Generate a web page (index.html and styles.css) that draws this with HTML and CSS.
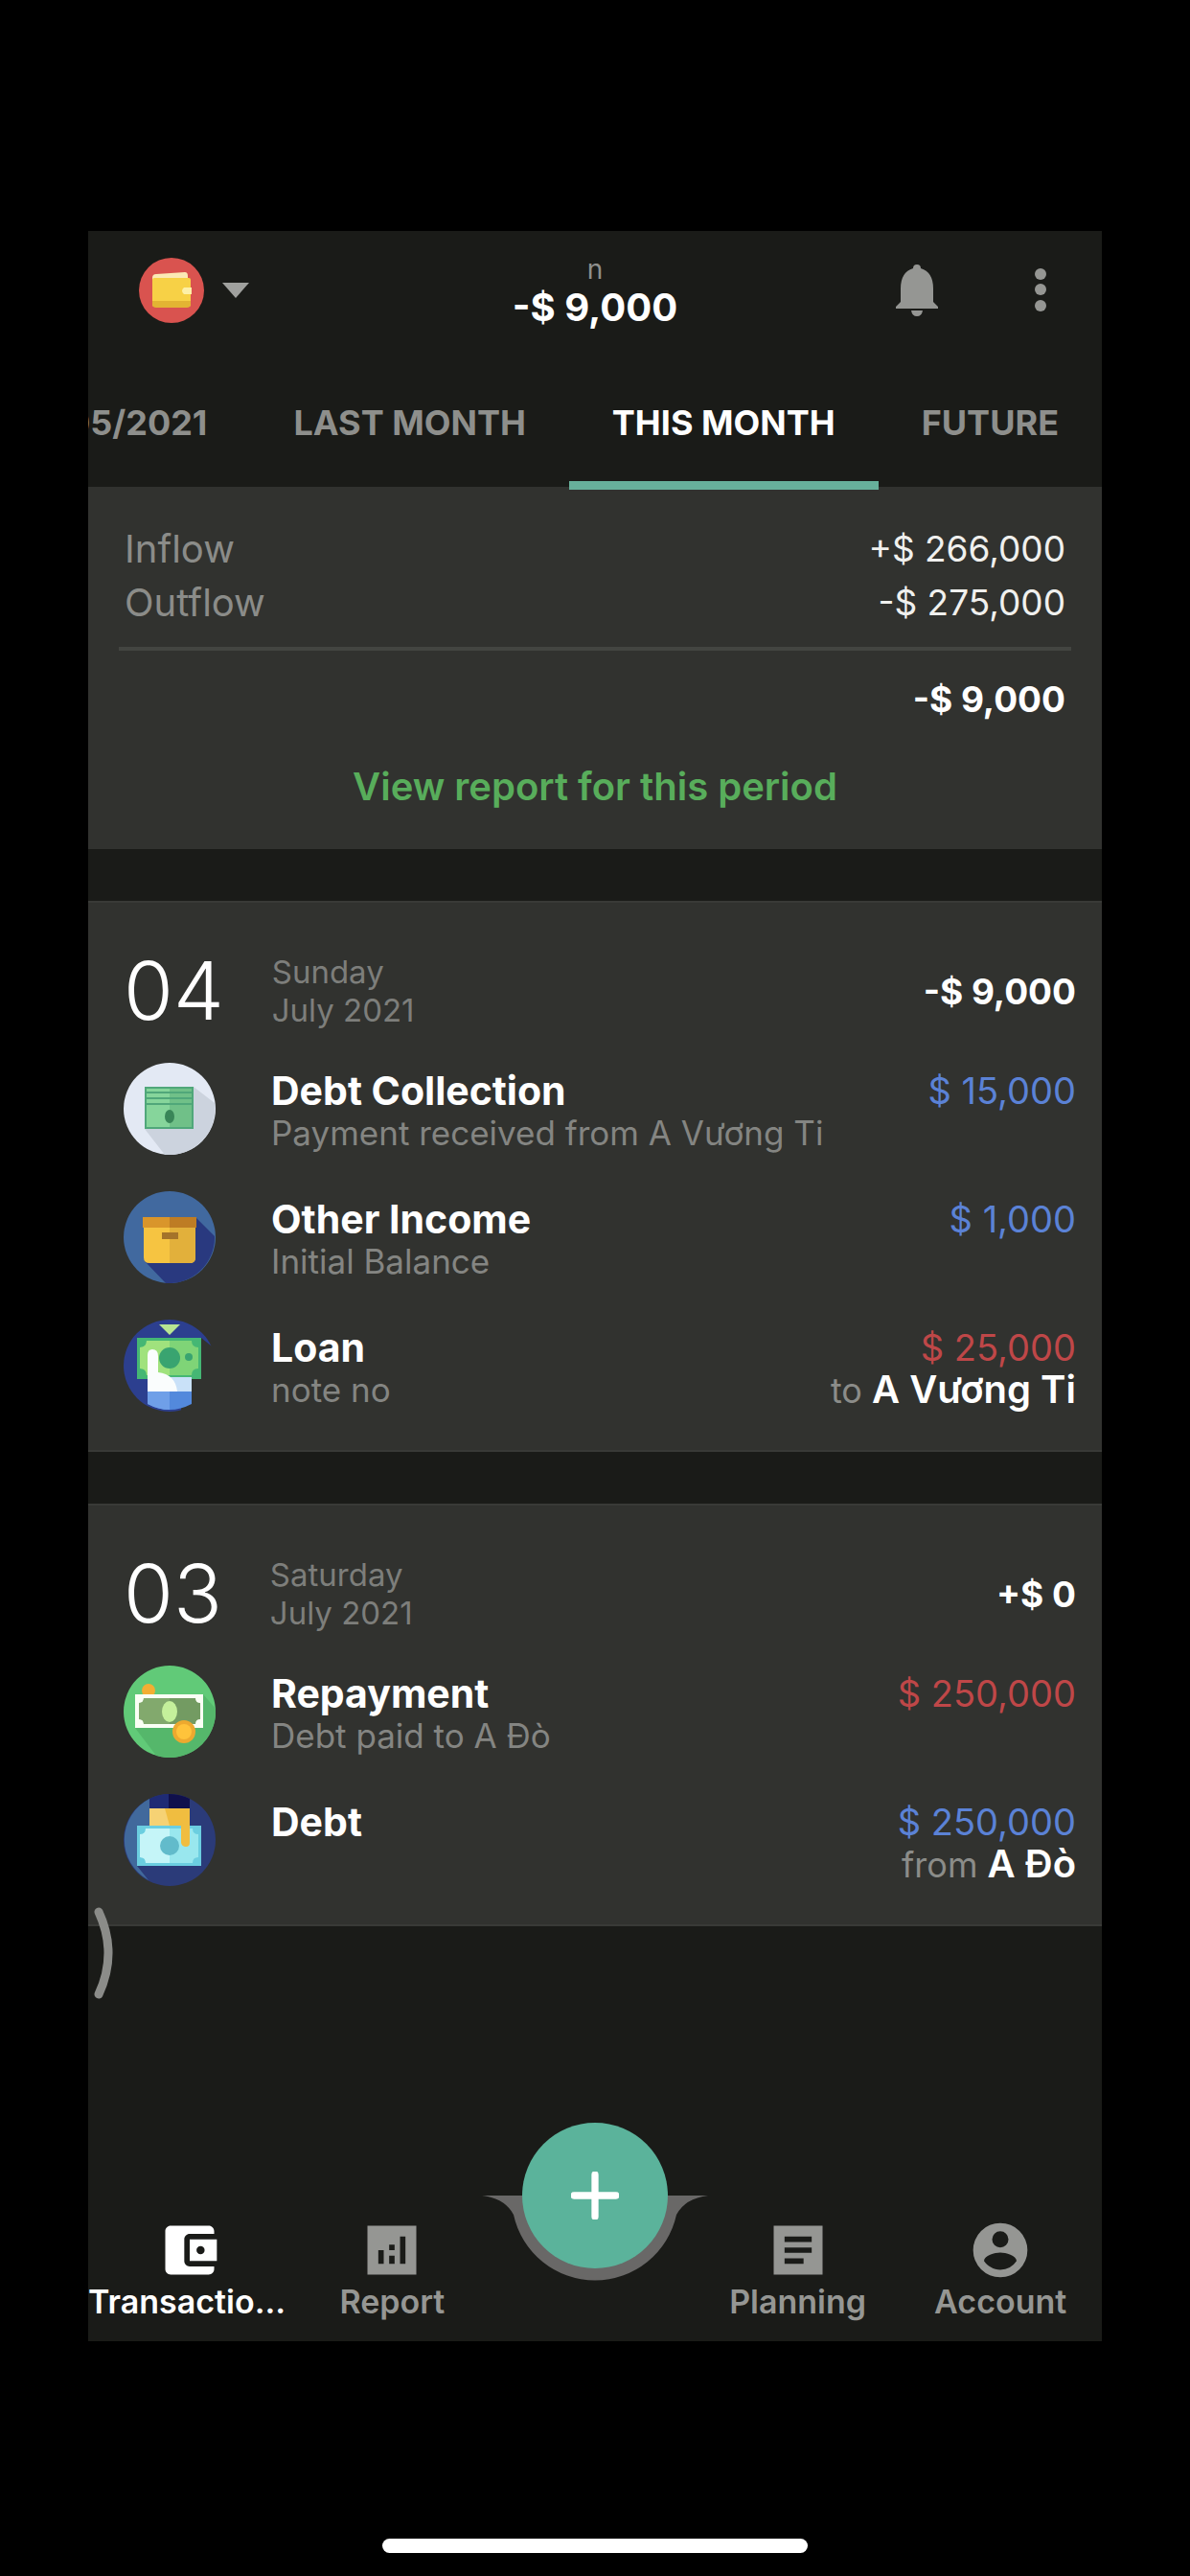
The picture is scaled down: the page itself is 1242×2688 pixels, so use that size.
FILE: index.html
```html
<!DOCTYPE html>
<html lang="en">
<head>
<meta charset="utf-8">
<meta name="viewport" content="width=device-width, initial-scale=1">
<title>Transactions</title>
<link rel="stylesheet" href="styles.css">
</head>
<body>
<div class="app">
  <header class="app-bar">
    <button class="wallet-picker" type="button" aria-label="Choose wallet">
      <svg class="wallet-icon" viewBox="0 0 70 70" aria-hidden="true">
        <circle cx="35" cy="35" r="34" fill="#d9534f"/>
        <path d="M15 22q0-4 4-4l30-2q3 0 3 4v6H15z" fill="#fbe9b4"/>
        <rect x="15" y="22" width="40" height="30" rx="2" fill="#f7d146"/>
        <path d="M15 46h40v3q0 4-4 4H19q-4 0-4-4z" fill="#e3b433"/>
        <path d="M48 32h8v7h-8q-4-3.500 0-7z" fill="#fdf0a8"/>
      </svg>
      <svg class="caret" viewBox="0 0 28 16" aria-hidden="true"><path d="M0 0h28L14 16z" fill="#a0a19e"/></svg>
    </button>
    <div class="title">
      <span class="title-name">n</span>
      <strong class="title-balance">-$ 9,000</strong>
    </div>
    <div class="actions">
      <button class="icon-button" type="button" aria-label="Notifications">
        <svg viewBox="0 0 72 72" aria-hidden="true"><path d="M32 13q0-4 4-4t4 4q13 4 13 21v14l5 5v2H14v-2l5-5V34q0-17 13-21zM30 57h12q-1 6-6 6t-6-6z" fill="#959693"/></svg>
      </button>
      <button class="icon-button" type="button" aria-label="More options">
        <svg viewBox="0 0 72 72" aria-hidden="true" fill="#959693"><circle cx="36" cy="19" r="6"/><circle cx="36" cy="35" r="6"/><circle cx="36" cy="52" r="6"/></svg>
      </button>
    </div>
  </header>

  <nav class="tabs" aria-label="Period">
    <button class="tab" type="button">05/2021</button>
    <button class="tab" type="button">LAST MONTH</button>
    <button class="tab tab-active" type="button" aria-current="true">THIS MONTH</button>
    <button class="tab" type="button">FUTURE</button>
  </nav>

  <main class="content">
    <section class="card summary">
      <div class="summary-line"><span class="muted">Inflow</span><span class="summary-value">+$ 266,000</span></div>
      <div class="summary-line"><span class="muted">Outflow</span><span class="summary-value">-$ 275,000</span></div>
      <hr class="divider">
      <div class="summary-total">-$ 9,000</div>
      <a class="report-link" href="#report">View report for this period</a>
    </section>

    <section class="card day">
      <header class="day-header">
        <span class="day-number">04</span>
        <span class="day-date">Sunday<br>July 2021</span>
        <strong class="day-total">-$ 9,000</strong>
      </header>
      <ul class="rows">
        <li class="row">
          <svg class="category" viewBox="0 0 96 96" aria-hidden="true">
            <circle cx="48" cy="48" r="48" fill="#e3e9f4"/>
            <path d="M73 25l22 17a48 48 0 0 1-52 54L22 69z" fill="#ccd3de"/>
            <path d="M22 25h51v44H22z" fill="#86d59b"/>
            <path d="M48 25h25v44H48z" fill="#70c088"/>
            <path d="M23 26h49v42H23zM24 31h48M24 37h48M24 43h48" fill="none" stroke="#50a77a" stroke-width="2"/>
            <ellipse cx="48" cy="56" rx="5" ry="7" fill="#398558"/>
          </svg>
          <div class="row-text"><strong class="row-title">Debt Collection</strong><span class="row-note">Payment received from A Vương Ti</span></div>
          <div class="row-amount"><span class="in">$ 15,000</span></div>
        </li>
        <li class="row">
          <svg class="category" viewBox="0 0 96 96" aria-hidden="true">
            <circle cx="48" cy="48" r="48" fill="#41699f"/>
            <path d="M76 28l19 19a48 48 0 0 1-51 49L22 73z" fill="#29397f"/>
            <path d="M21 36h54v33q0 6-6 6H27q-6 0-6-6z" fill="#f6c441"/>
            <path d="M48 36h27v33q0 6-6 6H48z" fill="#e2b03b"/>
            <path d="M20 27h28v11H20z" fill="#d9952b"/><path d="M48 27h28v11H48z" fill="#be7c24"/>
            <path d="M40 43h17v7H40z" fill="#a4732a"/>
          </svg>
          <div class="row-text"><strong class="row-title">Other Income</strong><span class="row-note">Initial Balance</span></div>
          <div class="row-amount"><span class="in">$ 1,000</span></div>
        </li>
        <li class="row">
          <svg class="category" viewBox="0 0 96 96" aria-hidden="true">
            <circle cx="48" cy="48" r="48" fill="#2c3f8f"/>
            <path d="M81 19l15 12v65H60V60z" fill="#31322f"/>
            <path d="M37 5h22L48 16z" fill="#b8e692"/>
            <path d="M14 19h67v43H14z" fill="#45b774"/>
            <path d="M24 22h47q0 7 7 7v22q-7 0-7 7H24q0-7-7-7V29q7 0 7-7z" fill="#7fd477"/>
            <path d="M24 22h24v36H24q0-7-7-7V29q7 0 7-7z" fill="#a0e27d"/>
            <circle cx="48" cy="40" r="11" fill="#39a470"/><circle cx="68" cy="39" r="4" fill="#39a470"/>
            <path d="M25 60h46v16H25z" fill="#c9e1f8"/>
            <path d="M25 37q0-6 5-6 6 0 6 7v17q18 2 20 20H25z" fill="#fafdfd"/>
            <path d="M25 75h46v13q-23 12-46 0z" fill="#5389dc"/>
            <path d="M25 75h23v19q-12 0-23-6z" fill="#6f9fe8"/>
          </svg>
          <div class="row-text"><strong class="row-title">Loan</strong><span class="row-note">note no</span></div>
          <div class="row-amount"><span class="out">$ 25,000</span><span class="party">to <b>A Vương Ti</b></span></div>
        </li>
      </ul>
    </section>

    <section class="card day">
      <header class="day-header">
        <span class="day-number">03</span>
        <span class="day-date">Saturday<br>July 2021</span>
        <strong class="day-total">+$ 0</strong>
      </header>
      <ul class="rows">
        <li class="row">
          <svg class="category" viewBox="0 0 96 96" aria-hidden="true">
            <circle cx="48" cy="48" r="48" fill="#61ca78"/>
            <path d="M83 30l13 15a48 48 0 0 1-62 49L12 65z" fill="#55b76b"/>
            <circle cx="26" cy="26" r="7" fill="#f3ae33"/>
            <path d="M12 30h71v35H12z" fill="#fafff5"/>
            <path d="M21 34h54q0 5 5 5v17q-5 0-5 5H21q0-5-5-5V39q5 0 5-5z" fill="#739b62"/>
            <path d="M21 34h27v27H21q0-5-5-5V39q5 0 5-5z" fill="#82a96d"/>
            <ellipse cx="48" cy="48" rx="8" ry="11" fill="#c4f09b"/>
            <circle cx="63" cy="69" r="12" fill="#eda92f"/><circle cx="63" cy="69" r="8" fill="#ffc33b"/>
          </svg>
          <div class="row-text"><strong class="row-title">Repayment</strong><span class="row-note">Debt paid to A Đò</span></div>
          <div class="row-amount"><span class="out">$ 250,000</span></div>
        </li>
        <li class="row">
          <svg class="category" viewBox="0 0 96 96" aria-hidden="true">
            <circle cx="48" cy="48" r="48" fill="#2b3b79"/>
            <path d="M27 5v28H14v42l12 15A48 48 0 0 1 27 5z" fill="#41699c"/>
            <path d="M27 5Q37 0 47 0v16H27z" fill="#1f2b74"/><path d="M47 0q12 0 22 5v11H47z" fill="#10104c"/>
            <path d="M14 33h67v42H14z" fill="#6bcee0"/>
            <path d="M23 36h49q0 6 6 6v24q-6 0-6 6H23q0-6-6-6V42q6 0 6-6z" fill="#99e7ee"/>
            <path d="M23 36h25v36H23q0-6-6-6V42q6 0 6-6z" fill="#c5f5f8"/>
            <circle cx="48" cy="54" r="10" fill="#62bbcb"/>
            <path d="M27 15h42v36q0 4-4 4t-5-4V33H27z" fill="#f0bd40"/><path d="M27 15h16l5 18H27z" fill="#f6d274"/>
          </svg>
          <div class="row-text"><strong class="row-title">Debt</strong></div>
          <div class="row-amount"><span class="in">$ 250,000</span><span class="party">from <b>A Đò</b></span></div>
        </li>
      </ul>
      <svg class="edge-handle" viewBox="0 0 20 96" aria-hidden="true"><path d="M5 5q20 43 0 86" fill="none" stroke="#8b8c89" stroke-width="9" stroke-linecap="round"/></svg>
    </section>
  </main>

  <nav class="bottom-nav" aria-label="Main">
    <a class="nav-item nav-active" href="#transactions">
      <svg class="nav-icon" viewBox="0 0 24 24" aria-hidden="true"><path fill="currentColor" d="M21 18v1c0 1.100-.9 2-2 2H5c-1.110 0-2-.9-2-2V5c0-1.100.89-2 2-2h14c1.100 0 2 .9 2 2v1h-9c-1.110 0-2 .9-2 2v8c0 1.100.89 2 2 2h9zm-9-2h10V8H12v8zm4-2.500c-.83 0-1.500-.67-1.500-1.500s.67-1.500 1.500-1.500 1.500.67 1.500 1.500-.67 1.500-1.500 1.500z"/></svg>
      <span class="nav-label">Transactio...</span>
    </a>
    <a class="nav-item" href="#report">
      <svg class="nav-icon" viewBox="0 0 24 24" aria-hidden="true"><path fill="currentColor" fill-rule="evenodd" d="M3 3h18v18H3zM7 12v5h2v-5zM11 10v2h2v-2zM11 14v3h2v-3zM15 7v10h2V7z"/></svg>
      <span class="nav-label">Report</span>
    </a>
    <div class="nav-center">
      <svg class="cradle" viewBox="0 0 236 92" aria-hidden="true"><path d="M0 0h236q-24 3-33 20a87 87 0 0 1-170 0Q24 3 0 0z" fill="#696867"/></svg>
      <button class="fab" type="button" aria-label="Add transaction">
        <svg class="fab-icon" viewBox="0 0 48 48" aria-hidden="true"><path d="M24 3v42M3 24h42" stroke="#fff" stroke-width="7" stroke-linecap="round"/></svg>
      </button>
    </div>
    <a class="nav-item" href="#planning">
      <svg class="nav-icon" viewBox="0 0 24 24" aria-hidden="true"><path fill="currentColor" fill-rule="evenodd" d="M3 3h18v18H3zM7 7v2h10V7zM7 11v2h10v-2zM7 15v2h7v-2z"/></svg>
      <span class="nav-label">Planning</span>
    </a>
    <a class="nav-item" href="#account">
      <svg class="nav-icon" viewBox="0 0 24 24" aria-hidden="true"><path fill="currentColor" fill-rule="evenodd" d="M12 2a10 10 0 1 0 0 20 10 10 0 0 0 0-20zM12 5a3 3 0 1 1 0 6 3 3 0 0 1 0-6zM12 19.200c-2.500 0-4.710-1.280-6-3.220.03-1.990 4-3.080 6-3.080s5.970 1.090 6 3.080a7.200 7.200 0 0 1-6 3.220z"/></svg>
      <span class="nav-label">Account</span>
    </a>
  </nav>
</div>
<div class="home-indicator"></div>
</body>
</html>
```
FILE: styles.css
```css
* { box-sizing: border-box; }

body {
  margin: 0;
  min-height: 100vh;
  display: flex;
  flex-direction: column;
  background: #000;
  color: #fff;
  font-family: Inter, "Noto Sans", sans-serif;
  font-size: 37px;
}

button {
  padding: 0;
  border: 0;
  background: none;
  color: inherit;
  font: inherit;
}

a { color: inherit; text-decoration: none; }
svg { display: block; }

.app {
  flex: 1;
  display: flex;
  flex-direction: column;
  margin: 241px 92px 0;
  background: #1a1b18;
}

/* Top bar */
.app-bar {
  display: grid;
  grid-template-columns: 1fr auto 1fr;
  align-items: center;
  min-height: 124px;
  padding: 0 28px;
}

.wallet-picker {
  justify-self: start;
  display: flex;
  align-items: center;
  gap: 18px;
  padding-left: 24px;
}

.wallet-icon { width: 70px; height: 70px; }
.caret { width: 28px; height: 16px; }

.title {
  display: flex;
  flex-direction: column;
  align-items: center;
}

.title-name { font-size: 28px; line-height: 36px; color: #8e8f8c; }
.title-balance { font-size: 40px; line-height: 44px; }
.actions { justify-self: end; display: flex; gap: 57px; }
.icon-button, .icon-button svg { width: 72px; height: 72px; }

/* The active underline overlaps the card below by 3px */
.tabs {
  display: flex;
  justify-content: flex-end;
  position: relative;
  z-index: 1;
  height: 146px;
  margin-bottom: -3px;
  overflow: hidden;
}

.tab {
  flex: none;
  padding: 14px 45px 0;
  border-bottom: 9px solid transparent;
  color: #8e8f8c;
  font-size: 36px;
  font-weight: 700;
  white-space: nowrap;
}

.tab-active { color: #fff; border-color: #67b09b; }

/* Cards */
.content { flex: 1; display: flex; flex-direction: column; gap: 54px; }
.card { background: #31322f; }

.summary {
  display: flex;
  flex-direction: column;
  padding: 37px 32px;
  line-height: 56px;
}

.summary-line { display: flex; justify-content: space-between; padding: 0 6px; }
.muted { font-size: 40px; color: #8b8c89; }
.summary-value { color: #f0f0ee; }
.divider { width: 100%; height: 4px; margin: 18px 0 23px; border: 0; background: #434541; }
.summary-total { padding: 0 6px; text-align: right; font-weight: 700; }
.report-link { align-self: center; margin-top: 35px; font-size: 40px; font-weight: 600; color: #58ad5b; }

.day {
  position: relative;
  padding: 52px 27px 21px 37px;
  border-top: 2px solid #393a37;
  border-bottom: 2px solid #393a37;
}

.day-header { display: flex; align-items: center; margin-bottom: 16px; }
.day-number { font-size: 84px; line-height: 80px; font-weight: 300; }
.day-date { margin-left: 50px; font-size: 33px; line-height: 40px; color: #7d7e7b; }
.day-total { margin-left: auto; }

.rows { margin: 0; padding: 0; list-style: none; }

.row {
  display: grid;
  grid-template-columns: 96px 1fr auto;
  column-gap: 58px;
  min-height: 134px;
  line-height: 44px;
}

.category { align-self: center; width: 96px; height: 96px; }
.row-text, .row-amount { display: flex; flex-direction: column; padding-top: 26px; }
.row-amount { text-align: right; }
.row-title { font-size: 41px; }
.row-note { font-size: 35px; color: #848582; }
.in, .out { font-size: 38px; }
.in { color: #5b82d6; }
.out { color: #bf4748; }
.party { font-size: 36px; color: #8b8c89; }
.party b { font-size: 40px; font-weight: 600; color: #fff; }

.edge-handle { position: absolute; left: 6px; bottom: -78px; width: 20px; height: 96px; }

/* Bottom navigation */
.bottom-nav { display: grid; grid-template-columns: repeat(5, 1fr); min-height: 152px; }

.nav-item {
  display: flex;
  flex-direction: column;
  align-items: center;
  padding-top: 23px;
  color: #959693;
  font-size: 34px;
  font-weight: 600;
}

.nav-icon { width: 68px; height: 68px; }
.nav-label { line-height: 40px; }
.nav-active { color: #fff; }
.nav-active .nav-label { align-self: flex-start; }

.nav-center { position: relative; }
.cradle { position: absolute; top: 0; left: 50%; width: 236px; height: 92px; transform: translateX(-50%); }

.fab {
  position: absolute;
  top: -76px;
  left: 50%;
  display: grid;
  place-items: center;
  width: 152px;
  height: 152px;
  border-radius: 50%;
  background: #5bb39b;
  transform: translateX(-50%);
}

.fab-icon { width: 50px; height: 50px; }

.home-indicator {
  align-self: center;
  width: 444px;
  height: 15px;
  margin: 206px 0 24px;
  border-radius: 8px;
  background: #fff;
}
```
